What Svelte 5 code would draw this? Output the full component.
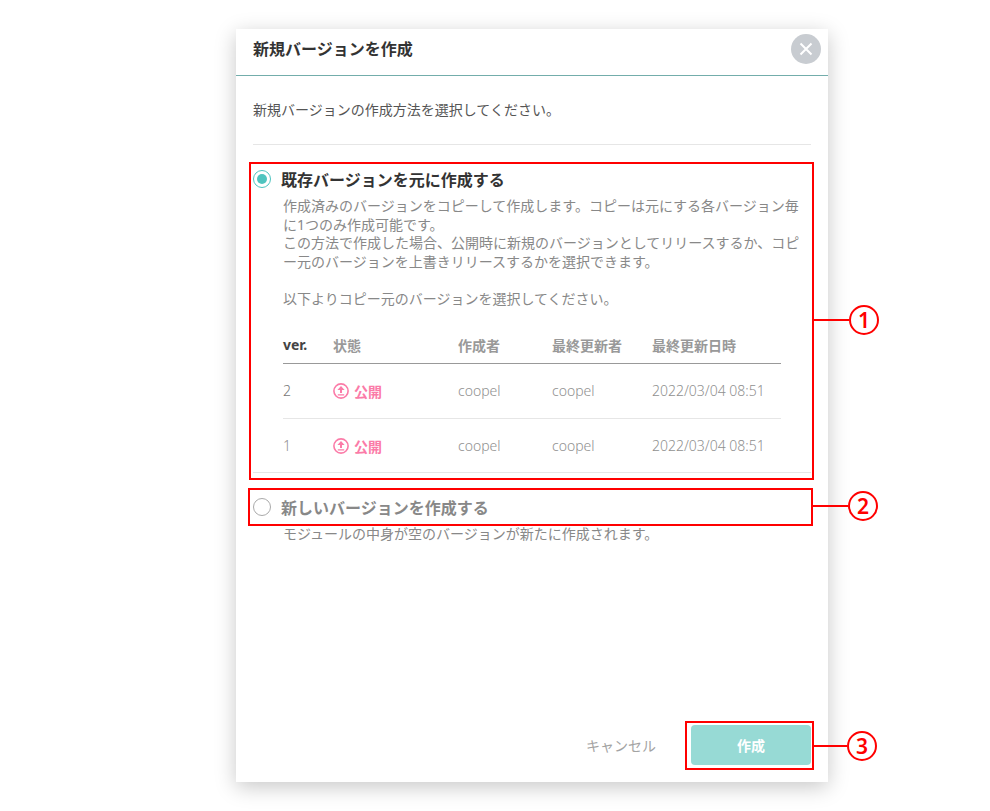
<script>
  const rows = [
    { ver: '2', dark: true },
    { ver: '1', dark: false }
  ];
  const notes = [
    { n: '1', cls: 'n1' },
    { n: '2', cls: 'n2' },
    { n: '3', cls: 'n3' }
  ];
</script>

<div class="page">
  <section class="dialog">
    <header class="head">
      <h2>新規バージョンを作成</h2>
      <button class="close" aria-label="閉じる">
        <svg viewBox="0 0 14 14" width="14" height="14"><path d="M1.5 1.5 12.5 12.5M12.5 1.5 1.5 12.5" stroke="#fff" stroke-width="2" fill="none" /></svg>
      </button>
    </header>

    <div class="body">
      <p class="lead">新規バージョンの作成方法を選択してください。</p>
      <div class="rule"></div>

      <div class="option first">
        <div class="opt-title">
          <span class="radio on"></span>
          <span>既存バージョンを元に作成する</span>
        </div>
        <p class="desc">作成済みのバージョンをコピーして作成します。コピーは元にする各バージョン毎に1つのみ作成可能です。<br />この方法で作成した場合、公開時に新規のバージョンとしてリリースするか、コピー元のバージョンを上書きリリースするかを選択できます。<br /><br />以下よりコピー元のバージョンを選択してください。</p>

        <div class="table">
          <div class="tr th">
            <span class="ver-h">ver.</span><span>状態</span><span>作成者</span><span>最終更新者</span><span>最終更新日時</span>
          </div>
          {#each rows as r}
            <div class="tr td">
              <span class:dark={r.dark}>{r.ver}</span>
              <span class="pub">
                <svg viewBox="0 0 16 16" width="16" height="16">
                  <circle cx="8" cy="8" r="7.1" fill="none" stroke="#fb7ba8" stroke-width="1.6" />
                  <path d="M8 3 4.4 7h2.6v3h2V7h2.6z M4.8 11.2h6.4v1.3H4.8z" fill="#fb7ba8" />
                </svg>
                公開
              </span>
              <span>coopel</span><span>coopel</span><span>2022/03/04 08:51</span>
            </div>
          {/each}
        </div>
      </div>

      <div class="option second">
        <div class="opt-title muted">
          <span class="radio"></span>
          <span>新しいバージョンを作成する</span>
        </div>
        <p class="desc">モジュールの中身が空のバージョンが新たに作成されます。</p>
      </div>
    </div>

    <footer class="foot">
      <button class="cancel">キャンセル</button>
      <button class="create">作成</button>
    </footer>
  </section>

  <div class="frame f1"></div>
  <div class="frame f2"></div>
  <div class="frame f3"></div>
  {#each notes as note}
    <div class="note {note.cls}"><i></i><b>{note.n}</b></div>
  {/each}
</div>

<style>
  :global(body) { margin: 0; background: #fff; }
  .page {
    position: relative;
    height: 811px;
    padding: 29px 0 0 236px;
    box-sizing: border-box;
    font-family: "Noto Sans", "Noto Sans CJK JP", sans-serif;
    font-size: 14px;
    color: #555;
    overflow: hidden;
  }
  .dialog {
    width: 592px;
    height: 753px;
    background: #fff;
    box-shadow: 0 5px 20px rgba(0, 0, 0, .22);
    display: flex;
    flex-direction: column;
  }
  .head {
    height: 46px;
    box-sizing: content-box;
    border-bottom: 1px solid #73adab;
    display: flex;
    align-items: center;
    justify-content: space-between;
    padding: 0 7px 0 17px;
    flex: none;
  }
  h2 {
    margin: 0 0 6px;
    font-size: 16px;
    font-weight: 700;
    color: #333;
    line-height: 20px;
  }
  .close {
    width: 30px;
    height: 30px;
    border: 0;
    border-radius: 50%;
    background: #c8ccd1;
    padding: 0;
    display: flex;
    align-items: center;
    justify-content: center;
    margin-bottom: 6px;
  }
  .body { flex: 1; padding: 0 17px; }
  .lead {
    margin: 24px 0 0;
    line-height: 20px;
    color: #555;
  }
  .rule { height: 1px; background: #e6e6e6; margin-top: 24px; }
  .option.first {
    margin: 23px 0;
    height: 305px;
    box-sizing: border-box;
    border-bottom: 1px solid #e6e6e6;
  }
  .opt-title {
    display: flex;
    align-items: center;
    gap: 10px;
    height: 22px;
    font-size: 16px;
    font-weight: 700;
    color: #333;
  }
  .opt-title.muted { color: #888; }
  .radio {
    width: 16px;
    height: 16px;
    border: 1px solid #aaa;
    border-radius: 50%;
    flex: none;
    position: relative;
  }
  .radio.on { border-color: #4fc4bf; }
  .radio.on::after {
    content: "";
    position: absolute;
    inset: 3px;
    border-radius: 50%;
    background: #4fc4bf;
  }
  .desc {
    margin: 7px 0 0 30px;
    width: 520px;
    line-height: 18.6px;
    color: #888;
  }
  .table { margin: 19px 0 0 30px; width: 498px; }
  .tr {
    display: grid;
    grid-template-columns: 50px 125px 94px 100px 1fr;
    align-items: center;
    box-sizing: border-box;
  }
  .th {
    height: 36px;
    border-bottom: 1px solid #999;
    font-weight: 700;
    color: #999;
    padding-bottom: 1px;
  }
  .ver-h { color: #444; }
  .td {
    height: 55px;
    border-bottom: 1px solid #e6e6e6;
    color: #909090;
    font-weight: 300;
  }
  .table .td:last-child { height: 54px; border-bottom: 0; }
  .td .dark { color: #777; }
  .pub {
    display: flex;
    align-items: center;
    gap: 5px;
    color: #fb7ba8;
    font-weight: 700;
  }
  .foot {
    height: 61px;
    box-sizing: border-box;
    padding: 4px 17px 0 0;
    flex: none;
    display: flex;
    justify-content: flex-end;
    align-items: flex-start;
    gap: 35px;
  }
  button { font: inherit; }
  .cancel {
    border: 0;
    background: none;
    padding: 0;
    height: 40px;
    color: #a3a3a3;
  }
  .create {
    width: 120px;
    height: 40px;
    border: 0;
    border-radius: 4px;
    background: #97dad5;
    color: #fff;
    font-weight: 700;
  }
  .frame { position: absolute; border: 2px solid #f00; box-sizing: border-box; }
  .f1 { left: 249px; top: 162px; width: 565px; height: 318px; }
  .f2 { left: 248px; top: 488px; width: 565px; height: 38px; }
  .f3 { left: 685px; top: 721px; width: 129px; height: 49px; }
  .note { position: absolute; display: flex; align-items: center; }
  .note i { display: block; height: 2px; background: #f00; flex: none; }
  .note b {
    width: 26px;
    height: 26px;
    border: 2px solid #f00;
    border-radius: 50%;
    color: #f00;
    display: flex;
    align-items: center;
    justify-content: center;
    font-size: 21px;
    font-weight: 600;
    flex: none;
    line-height: 1;
  }
  .n1 { left: 814px; top: 305px; }
  .n1 i { width: 35px; }
  .n2 { left: 813px; top: 491px; }
  .n2 i { width: 35px; }
  .n3 { left: 814px; top: 731px; }
  .n3 i { width: 33px; }
</style>
